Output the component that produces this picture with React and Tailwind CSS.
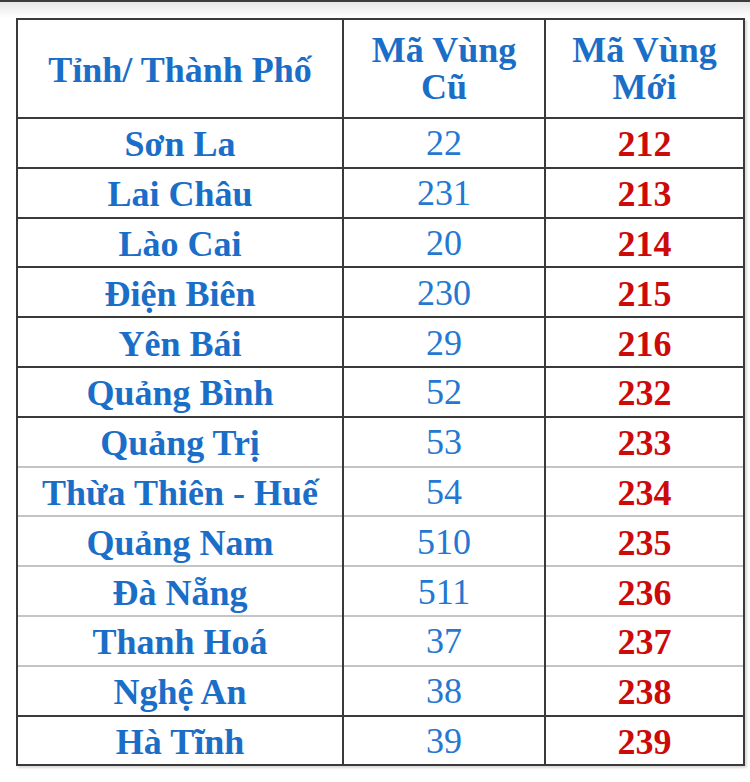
const rows = [
  { name: "Sơn La", oldCode: "22", newCode: "212", line: "dark" },
  { name: "Lai Châu", oldCode: "231", newCode: "213", line: "dark" },
  { name: "Lào Cai", oldCode: "20", newCode: "214", line: "dark" },
  { name: "Điện Biên", oldCode: "230", newCode: "215", line: "dark" },
  { name: "Yên Bái", oldCode: "29", newCode: "216", line: "dark" },
  { name: "Quảng Bình", oldCode: "52", newCode: "232", line: "dark" },
  { name: "Quảng Trị", oldCode: "53", newCode: "233", line: "light" },
  { name: "Thừa Thiên - Huế", oldCode: "54", newCode: "234", line: "light" },
  { name: "Quảng Nam", oldCode: "510", newCode: "235", line: "light" },
  { name: "Đà Nẵng", oldCode: "511", newCode: "236", line: "light" },
  { name: "Thanh Hoá", oldCode: "37", newCode: "237", line: "light" },
  { name: "Nghệ An", oldCode: "38", newCode: "238", line: "dark" },
  { name: "Hà Tĩnh", oldCode: "39", newCode: "239", line: "dark" },
];

export default function App() {
  return (
    <div className="w-[750px] h-[782px] bg-white overflow-hidden font-['Liberation_Serif','Times_New_Roman',serif]">
      {/* thanh trên cùng */}
      <div className="h-[18px] border-t-2 border-[#3c3c3c] bg-gradient-to-b from-[#e6e6e6] to-white" />

      <table className="ml-[16px] w-[727px] border-collapse table-fixed border-2 border-[#3a3a3a] shadow-[2px_2px_2px_rgba(0,0,0,0.15)]">
        <colgroup>
          <col className="w-[326px]" />
          <col className="w-[202px]" />
          <col className="w-[199px]" />
        </colgroup>
        <thead>
          <tr className="h-[99px]">
            <th className="border-2 border-[#3a3a3a] text-[36px] leading-[37px] font-bold text-[#1a6ec8] pt-[4px]">
              Tỉnh/ Thành Phố
            </th>
            <th className="border-2 border-[#3a3a3a] text-[36px] leading-[37px] font-bold text-[#1a6ec8]">
              Mã Vùng
              <br />
              Cũ
            </th>
            <th className="border-2 border-[#3a3a3a] text-[36px] leading-[37px] font-bold text-[#1a6ec8]">
              Mã Vùng
              <br />
              Mới
            </th>
          </tr>
        </thead>
        <tbody>
          {rows.map((r) => (
            <tr
              key={r.name}
              className={
                r.line === "dark"
                  ? "h-[49.8px] border-b-2 border-[#3a3a3a]"
                  : "h-[49.8px] border-b-2 border-[#c4c4c4]"
              }
            >
              <td className="border-x-2 border-[#3a3a3a] text-center text-[36px] leading-[40px] font-bold text-[#1a6ec8] pt-[3px]">
                {r.name}
              </td>
              <td className="border-x-2 border-[#3a3a3a] text-center text-[36px] leading-[40px] text-[#2478d2] pt-[1px]">
                {r.oldCode}
              </td>
              <td className="border-x-2 border-[#3a3a3a] text-center text-[36px] leading-[40px] font-bold text-[#cc0a0a] pt-[3px]">
                {r.newCode}
              </td>
            </tr>
          ))}
        </tbody>
      </table>
    </div>
  );
}
